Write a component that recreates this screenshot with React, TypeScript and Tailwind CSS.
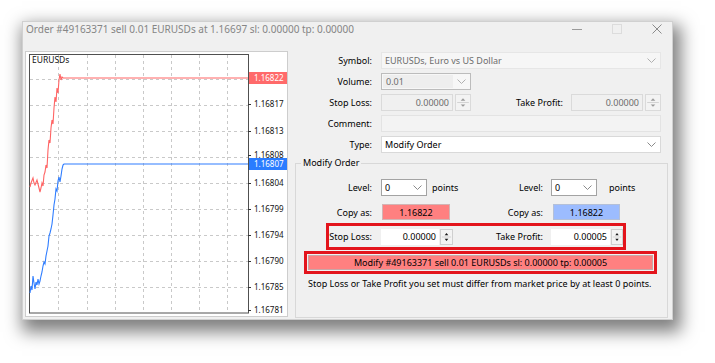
import React from "react";

// MT4 style "modify order" dialog

const redPts =
  "30,187 31,183 33,178 34,183 35,185 37,180 38,184 40,192 41,188 42,183 43,186 44,175 45,172 46,165 47,168 48,150 49,140 50,143 51,128 52,120 53,124 54,108 55,97 56,102 57,88 58,93 59,80 60,74 61,80 62,77 63,78 248,78";
const bluePts =
  "30,293 31,286 32,290 33,276 34,283 35,289 36,282 37,285 38,279 39,284 40,281 41,276 42,272 43,266 44,262 45,264 46,256 47,251 48,246 49,236 50,233 51,229 52,224 53,215 54,205 55,199 56,189 57,191 58,181 59,177 60,182 61,176 62,169 63,165 64,164 248,164";

const prices: [string, number][] = [
  ["1.16817", 104],
  ["1.16813", 131],
  ["1.16808", 155],
  ["1.16804", 183],
  ["1.16799", 209],
  ["1.16794", 235],
  ["1.16790", 261],
  ["1.16785", 287],
  ["1.16781", 310],
];
const vGrid = [58, 87, 115, 143, 171, 199, 227];
const hGrid = [79, 105, 131, 157, 183, 209, 235, 261, 287];

function Chevron({ color = "#8a8a8a" }: { color?: string }) {
  return (
    <svg width="9" height="5" viewBox="0 0 9 5">
      <polyline points="0.5,0.5 4.5,4.5 8.5,0.5" fill="none" stroke={color} strokeWidth="1" />
    </svg>
  );
}

function Spinner({ dark }: { dark?: boolean }) {
  const c = dark ? "#1a1a1a" : "#9a9a9a";
  return (
    <svg width="100%" height="100%" viewBox="0 0 12 16" preserveAspectRatio="none">
      <path d="M4 6 L6 3.5 L8 6 Z" fill={c} />
      <line x1="1" y1="8" x2="11" y2="8" stroke="#d0d0d0" strokeWidth="1" />
      <path d="M4 10 L8 10 L6 12.5 Z" fill={c} />
    </svg>
  );
}

function Chart() {
  return (
    <div className="ml-[2px] w-[263px] h-[266px] border border-[#cdcdcd] bg-white">
      <svg width="261" height="264" viewBox="26 52 261 264" className="block">
        {vGrid.map((x) => (
          <line key={x} x1={x + 0.5} y1="55" x2={x + 0.5} y2="313" stroke="#c9c9c9" strokeDasharray="3 3" />
        ))}
        {hGrid.map((y) => (
          <line key={y} x1="30" y1={y + 0.5} x2="248" y2={y + 0.5} stroke="#c9c9c9" strokeDasharray="3 3" />
        ))}
        <rect x="29.5" y="54.5" width="219" height="258.5" fill="none" stroke="#505050" />
        <polyline points={redPts} fill="none" stroke="#ff6464" strokeWidth="1.1" />
        <polyline points={bluePts} fill="none" stroke="#2f7dff" strokeWidth="1.1" />
        <text x="32" y="63" fontSize="8.5" fontFamily="Noto Sans, sans-serif" fill="#111">EURUSDs</text>
        {prices.map(([p, y]) => (
          <g key={p}>
            <line x1="248" y1={y + 0.5} x2="251" y2={y + 0.5} stroke="#333" />
            <text x="254" y={y + 3} fontSize="8" fontFamily="Noto Sans, sans-serif" fill="#111">{p}</text>
          </g>
        ))}
        <rect x="249" y="72" width="38" height="12" fill="#ff6a6a" />
        <text x="254" y="81" fontSize="8" fontFamily="Noto Sans, sans-serif" fill="#fff">1.16822</text>
        <rect x="249" y="158" width="38" height="12" fill="#2a7cff" />
        <text x="254" y="167" fontSize="8" fontFamily="Noto Sans, sans-serif" fill="#fff">1.16807</text>
      </svg>
    </div>
  );
}

function TopRows() {
  return (
    <div className="flex flex-col gap-[4px] pt-[1px]">
      <div className="flex items-center h-[17px]">
        <span className="w-[77px] text-right">Symbol:</span>
        <div className="ml-[9px] w-[280px] h-[17px] flex items-center justify-between pl-[3px] pr-[4px] bg-[#f6f6f6] border border-[#e6e6e6] text-[#6d6d6d]">
          <span>EURUSDs, Euro vs US Dollar</span>
          <Chevron color="#b0b0b0" />
        </div>
      </div>
      <div className="flex items-center h-[17px]">
        <span className="w-[77px] text-right">Volume:</span>
        <div className="ml-[9px] w-[90px] h-[17px] flex items-center bg-[#f7f7f7] border border-[#bcbcbc] p-[1px]">
          <div className="w-[70px] h-full bg-[#eeeeee] pl-[3px] text-[#6d6d6d] flex items-center">0.01</div>
          <div className="flex-1 flex justify-center"><Chevron color="#b0b0b0" /></div>
        </div>
      </div>
      <div className="flex items-center h-[17px]">
        <span className="w-[77px] text-right">Stop Loss:</span>
        <div className="ml-[9px] w-[72px] h-[17px] bg-[#f0f0f0] border border-[#dadada] text-right pr-[3px] text-[#6d6d6d] flex items-center justify-end">0.00000</div>
        <div className="ml-[2px] w-[16px] h-[17px] border border-[#dadada] bg-[#f3f3f3]"><Spinner /></div>
        <span className="w-[92px] text-right">Take Profit:</span>
        <div className="ml-[8px] w-[72px] h-[17px] bg-[#f0f0f0] border border-[#dadada] pr-[3px] text-[#6d6d6d] flex items-center justify-end">0.00000</div>
        <div className="ml-[2px] w-[16px] h-[17px] border border-[#dadada] bg-[#f3f3f3]"><Spinner /></div>
      </div>
      <div className="flex items-center h-[17px]">
        <span className="w-[77px] text-right">Comment:</span>
        <div className="ml-[9px] w-[280px] h-[17px] bg-[#f3f3f3] border border-[#e3e3e3]" />
      </div>
      <div className="flex items-center h-[17px]">
        <span className="w-[77px] text-right">Type:</span>
        <div className="ml-[9px] w-[280px] h-[17px] flex items-center justify-between pl-[3px] pr-[4px] bg-white border border-[#d9d9d9]">
          <span>Modify Order</span>
          <Chevron />
        </div>
      </div>
    </div>
  );
}

function LevelSelect() {
  return (
    <div className="w-[46px] h-[17px] bg-white border border-[#a3a3a3] flex items-center justify-between pl-[3px] pr-[4px]">
      <span>0</span>
      <Chevron />
    </div>
  );
}

function ModifyGroup() {
  return (
    <fieldset className="mt-[4px] w-[373px] h-[161px] border border-[#d8d8d8]">
      <legend className="ml-[5px] px-[2px] leading-[12px]">Modify Order</legend>

      <div className="mt-[10px] flex items-center h-[17px]">
        <div className="w-[174px] flex items-center">
          <span className="w-[76px] text-right">Level:</span>
          <div className="ml-[9px]"><LevelSelect /></div>
          <span className="ml-[5px]">points</span>
        </div>
        <span className="w-[73px] text-right">Level:</span>
        <div className="ml-[8px]"><LevelSelect /></div>
        <span className="ml-[12px]">points</span>
      </div>

      <div className="mt-[8px] flex items-center h-[16px]">
        <div className="w-[174px] flex items-center">
          <span className="w-[76px] text-right">Copy as:</span>
          <div className="ml-[10px] w-[68px] h-[16px] bg-[#ff8080] border border-[#d2b4b4] flex items-center justify-center">1.16822</div>
        </div>
        <span className="w-[73px] text-right">Copy as:</span>
        <div className="ml-[10px] w-[67px] h-[16px] bg-[#9cbcff] border border-[#b4c0d8] flex items-center justify-center">1.16822</div>
      </div>

      <div className="mt-[3px] ml-[30px] w-[300px] h-[27px] border-[3px] border-[#e3141c] flex items-center">
        <span className="w-[43px] text-right whitespace-nowrap">Stop Loss:</span>
        <div className="ml-[9px] w-[58px] h-[16px] bg-white pr-[3px] flex items-center justify-end">0.00000</div>
        <div className="ml-[1px] w-[13px] h-[16px] border border-[#cfcfcf] bg-[#f3f3f3]"><Spinner dark /></div>
        <span className="w-[90px] text-right">Take Profit:</span>
        <div className="ml-[8px] w-[59px] h-[16px] bg-white pr-[3px] flex items-center justify-end">0.00005</div>
        <div className="ml-[1px] w-[12px] h-[16px] border border-[#cfcfcf] bg-[#f3f3f3]"><Spinner dark /></div>
      </div>

      <div className="mt-[1px] ml-[8px] w-[353px] h-[23px] border-[3px] border-[#e3141c] p-[1px]">
        <div className="w-full h-full bg-[#ff8080] border border-[#c9a5a5] flex items-center justify-center">
          Modify #49163371 sell 0.01 EURUSDs sl: 0.00000 tp: 0.00005
        </div>
      </div>

      <p className="mt-[4px] ml-[12px] leading-[12px] whitespace-nowrap">
        Stop Loss or Take Profit you set must differ from market price by at least 0 points.
      </p>
    </fieldset>
  );
}

export default function App() {
  return (
    <div className="w-[715px] h-[363px] bg-white pl-[22px] pt-[21px] font-['Noto_Sans',sans-serif] text-[9px] text-black leading-none">
      <div className="w-[651px] h-[299px] bg-[#f0f0f0] border border-[#d0d0d0] shadow-[4px_8px_16px_4px_rgba(0,0,0,0.5)] flex flex-col">
        <div className="h-[14px] flex items-center">
          <span className="ml-[3px] flex-1 text-[10px] text-[#858585]">
            Order #49163371 sell 0.01 EURUSDs at 1.16697 sl: 0.00000 tp: 0.00000
          </span>
          <svg width="10" height="10" viewBox="0 0 10 10">
            <line x1="0" y1="5.5" x2="10" y2="5.5" stroke="#9a9a9a" />
          </svg>
          <svg width="10" height="10" viewBox="0 0 10 10" className="ml-[30px]">
            <rect x="0.5" y="0.5" width="9" height="9" fill="none" stroke="#dcdcdc" />
          </svg>
          <svg width="10" height="10" viewBox="0 0 10 10" className="ml-[30px] mr-[10px]">
            <path d="M0.5 0.5 L9.5 9.5 M9.5 0.5 L0.5 9.5" stroke="#8a8a8a" fill="none" />
          </svg>
        </div>
        <div className="pt-[15px] flex flex-row">
          <Chart />
          <div className="ml-[7px] w-[373px] flex flex-col">
            <TopRows />
            <ModifyGroup />
          </div>
        </div>
      </div>
    </div>
  );
}
